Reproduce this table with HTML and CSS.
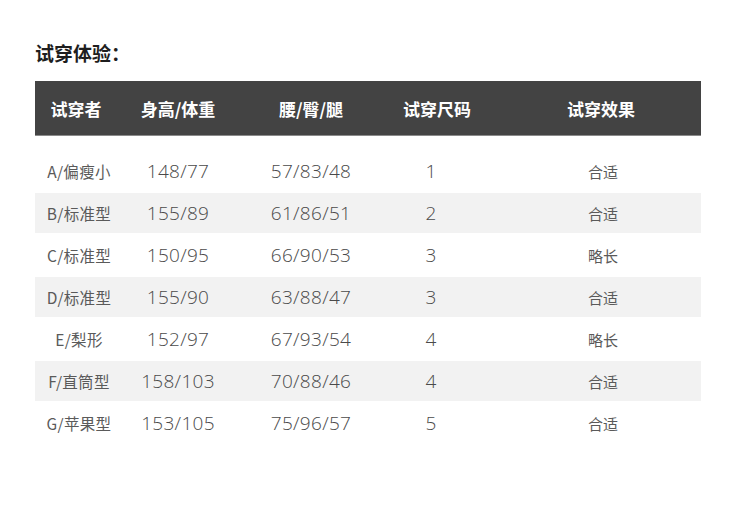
FILE: index.html
```html
<!DOCTYPE html>
<html lang="zh">
<head>
<meta charset="utf-8">
<link rel="stylesheet" href="styles.css">
</head>
<body>
<div class="page">
  <h2 class="title">试穿体验：</h2>
  <div class="table">
    <div class="row head">
      <div class="c1">试穿者</div>
      <div class="c2">身高/体重</div>
      <div class="c3">腰/臀/腿</div>
      <div class="c4">试穿尺码</div>
      <div class="c5">试穿效果</div>
    </div>
    <div class="body">
      <div class="row">
        <div class="c1">A/偏瘦小</div><div class="c2 num">148/77</div><div class="c3 num">57/83/48</div><div class="c4 num">1</div><div class="c5">合适</div>
      </div>
      <div class="row alt">
        <div class="c1">B/标准型</div><div class="c2 num">155/89</div><div class="c3 num">61/86/51</div><div class="c4 num">2</div><div class="c5">合适</div>
      </div>
      <div class="row">
        <div class="c1">C/标准型</div><div class="c2 num">150/95</div><div class="c3 num">66/90/53</div><div class="c4 num">3</div><div class="c5">略长</div>
      </div>
      <div class="row alt">
        <div class="c1">D/标准型</div><div class="c2 num">155/90</div><div class="c3 num">63/88/47</div><div class="c4 num">3</div><div class="c5">合适</div>
      </div>
      <div class="row">
        <div class="c1">E/梨形</div><div class="c2 num">152/97</div><div class="c3 num">67/93/54</div><div class="c4 num">4</div><div class="c5">略长</div>
      </div>
      <div class="row alt">
        <div class="c1">F/直筒型</div><div class="c2 num">158/103</div><div class="c3 num">70/88/46</div><div class="c4 num">4</div><div class="c5">合适</div>
      </div>
      <div class="row">
        <div class="c1">G/苹果型</div><div class="c2 num">153/105</div><div class="c3 num">75/96/57</div><div class="c4 num">5</div><div class="c5">合适</div>
      </div>
    </div>
  </div>
</div>
</body>
</html>
```
FILE: styles.css
```css
html, body {
  margin: 0;
  padding: 0;
  background: #ffffff;
}
.page {
  width: 666px;
  padding: 41px 0 0 35px;
  font-family: "Noto Sans CJK SC", "Noto Sans", sans-serif;
}
.title {
  margin: 0;
  font-size: 19px;
  line-height: 24px;
  font-weight: 700;
  color: #1e1e1e;
}
.table {
  margin-top: 16px;
}
.row {
  display: grid;
  grid-template-columns: 88px 110px 156px 86px 1fr;
  align-items: center;
  text-align: center;
  height: 44px;
  color: #5a5a5a;
  font-size: 15px;
}
.row > div {
  white-space: nowrap;
}
.row .c5 {
  padding-left: 30px;
}
.row .c1 {
  font-size: 15.5px;
  letter-spacing: 0.3px;
}
.row.head {
  height: 54px;
  background: #434343;
  border-bottom: 1px solid #8a8a8a;
  color: #ffffff;
  font-size: 17px;
  font-weight: 700;
}
.row.head .c1 {
  font-size: 17px;
  letter-spacing: 0;
  padding-right: 6px;
}
.row.head .c4 { padding-left: 10px; }
.row.head .c5 { padding-left: 26px; }
.body {
  padding-top: 13px;
}
.row.alt {
  height: 40px;
  background: #f2f2f2;
}
.num {
  font-family: "Open Sans", "Noto Sans", sans-serif;
  font-weight: 300;
  font-size: 19px;
  letter-spacing: 0.3px;
  color: #4a4a4a;
}
.row .c4.num {
  padding-right: 2px;
}
```
